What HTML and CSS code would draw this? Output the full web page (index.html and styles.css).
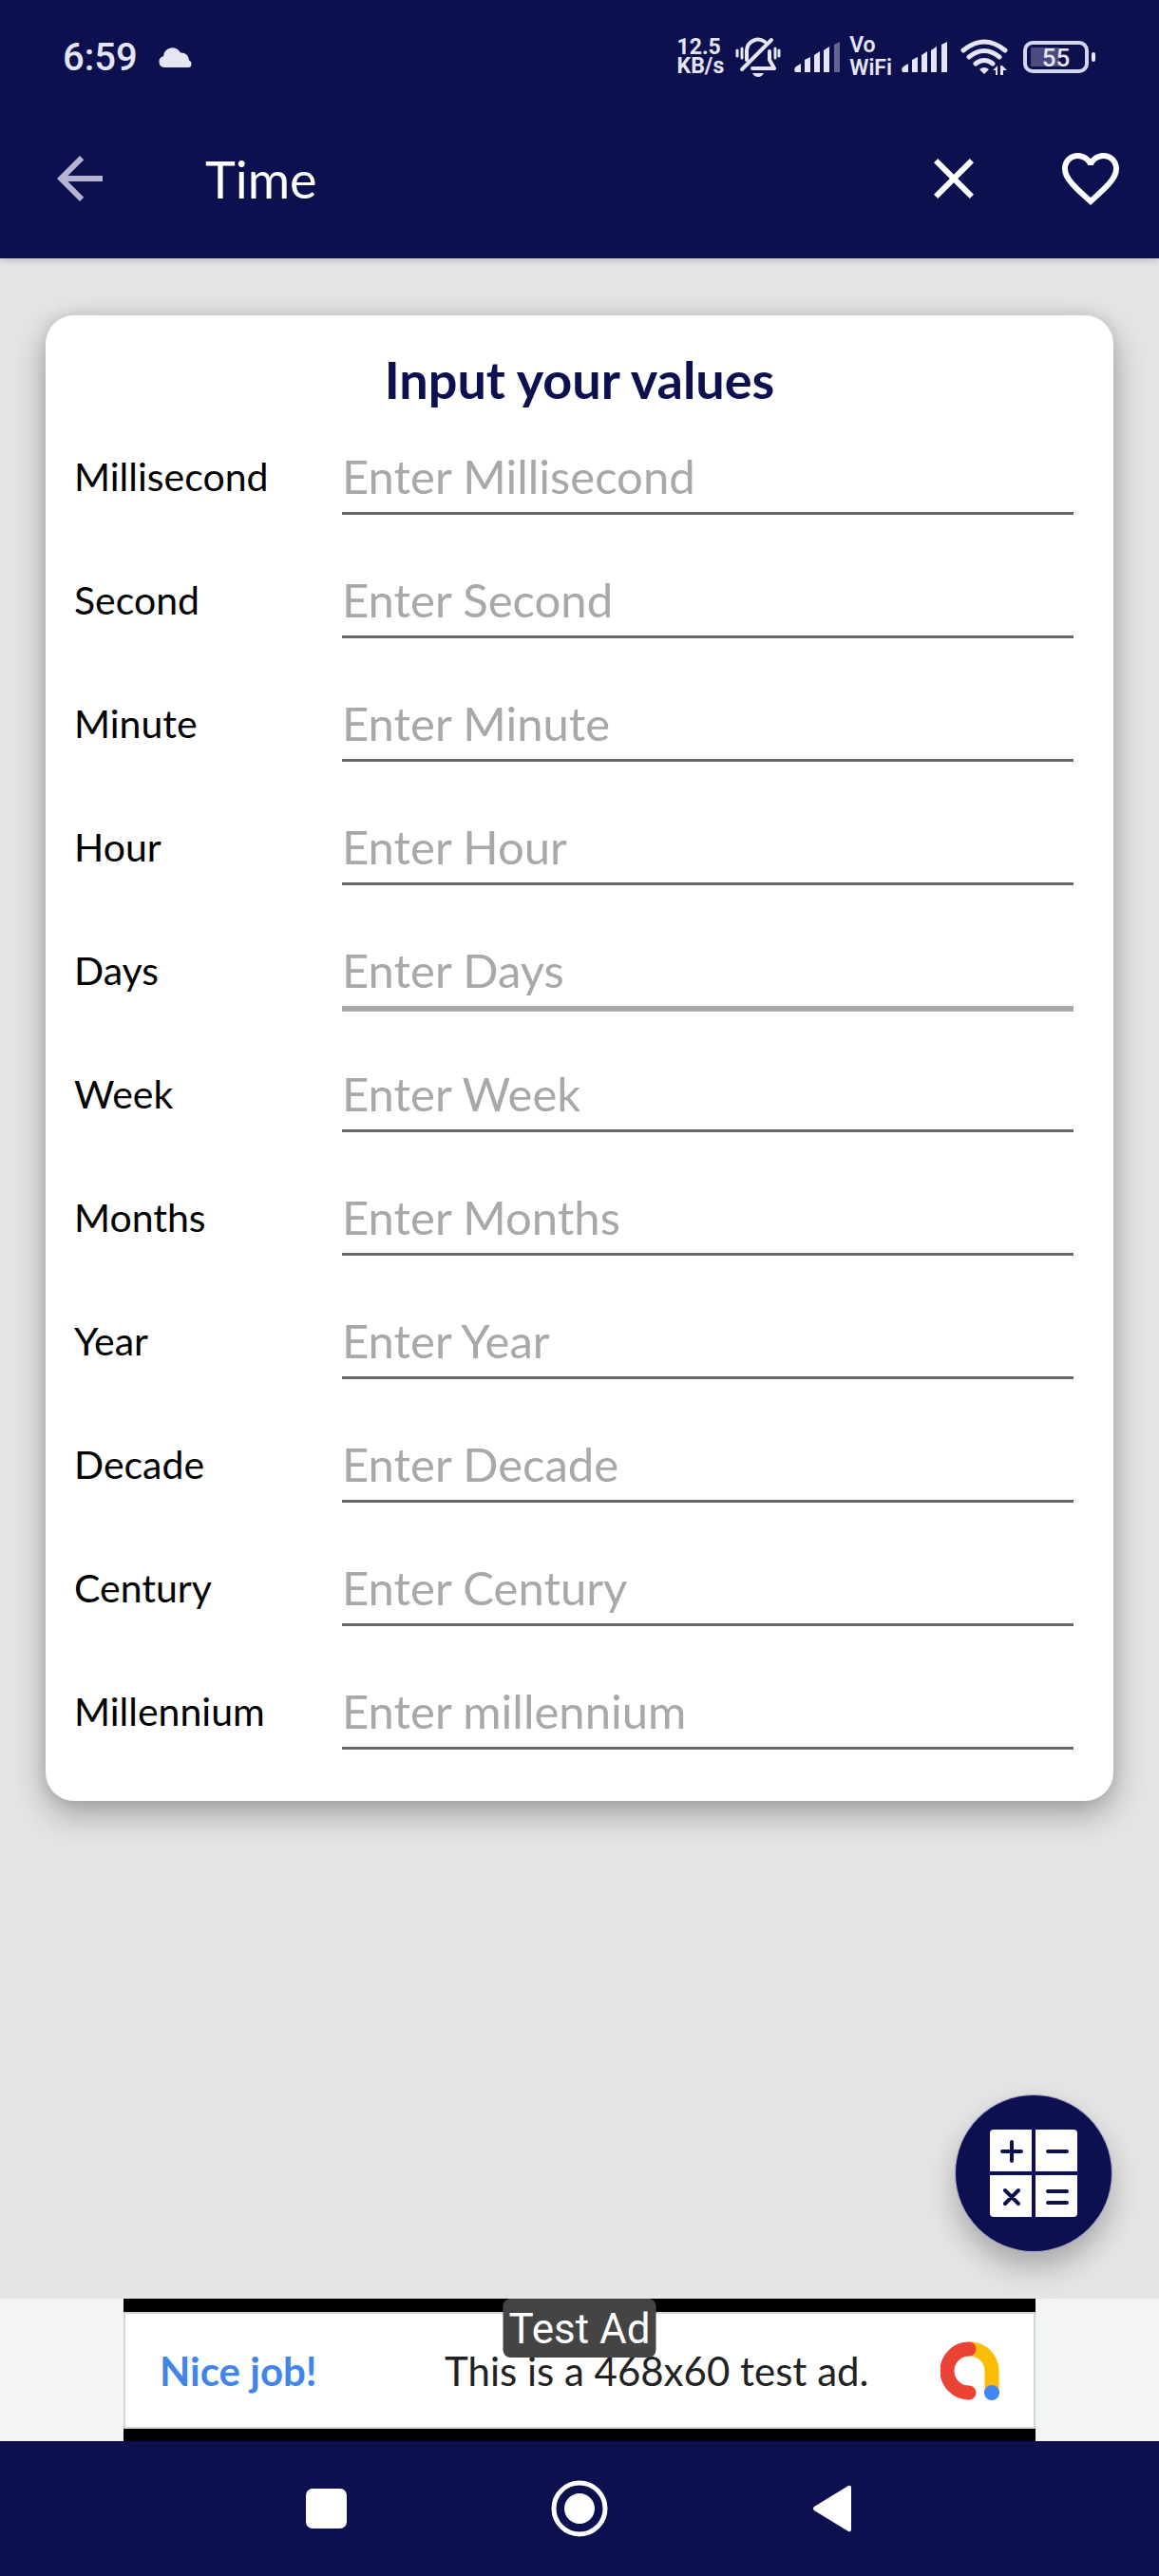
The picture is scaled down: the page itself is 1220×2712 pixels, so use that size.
FILE: index.html
```html
<!DOCTYPE html>
<html lang="en">
<head>
  <meta charset="UTF-8">
  <meta name="viewport" content="width=device-width, initial-scale=1.0">
  <title>Time</title>
  <link rel="stylesheet" href="styles.css">
</head>
<body>
  <header class="top">
    <div class="status">
      <span class="clock">6:59</span>
      <svg class="cloud" width="36" height="22" viewBox="0 0 36 22"><path d="M6 22a6 6 0 0 1-1-11.800A9.500 9.500 0 0 1 23 6.500a8 8 0 0 1 9 8A4 4 0 0 1 32 22z"/></svg>
      <div class="speed">12.5<br>KB/s</div>
      <svg class="bell" width="48" height="42" viewBox="0 0 48 42">
        <g fill="none" stroke="#e6e5f6" stroke-width="4" stroke-linecap="round" stroke-linejoin="round">
          <path d="M12 24V14a12 12 0 0 1 19-9M36 15v9l5 9H18"/>
          <path d="M38 3L7 34"/>
          <path stroke-width="3" d="M2 14v6M7 12v10M42 12v10M46 14v6"/>
        </g>
        <path d="M18 38h12q-2 4-6 4t-6-4z"/>
      </svg>
      <svg class="signal" width="48" height="32" viewBox="0 0 48 32"><path d="M1 32q-2-4 1-6l5-3v9zM11 32V19l6-3v16zM21 32V14l6-4v22zM31 32V9l6-4v27z"/><path opacity=".4" d="M42 32V3l6-3v32z"/></svg>
      <div class="vowifi">Vo<br>WiFi</div>
      <svg class="signal" width="48" height="32" viewBox="0 0 48 32"><path d="M1 32q-2-4 1-6l5-3v9zM11 32V19l6-3v16zM21 32V14l6-4v22zM31 32V9l6-4v27zM42 32V3l6-3v32z"/></svg>
      <svg class="wifi" width="50" height="38" viewBox="0 0 50 38">
        <path fill="none" stroke="#e6e5f6" stroke-width="5" stroke-linecap="round" d="M3 12q22-18 44 0M9 19q16-13 32 0M16 26q9-7 18 0"/>
        <path d="M20 32q5-4 10 0l-5 5zM39 28v10h-2v-5h-3zM42 38V28h2l5 5h-4v5z"/>
      </svg>
      <div class="battery"><span>55</span></div>
    </div>
    <div class="appbar">
      <button class="icon-btn back" aria-label="Back"><svg viewBox="0 0 24 24"><path d="M20 11H7.830l5.590-5.590L12 4l-8 8 8 8 1.410-1.410L7.830 13H20z"/></svg></button>
      <h1>Time</h1>
      <button class="icon-btn" aria-label="Clear"><svg viewBox="0 0 24 24"><path d="M19 6.410L17.590 5 12 10.590 6.410 5 5 6.410 10.590 12 5 17.590 6.410 19 12 13.410 17.590 19 19 17.590 13.410 12z"/></svg></button>
      <button class="icon-btn" aria-label="Favourite"><svg viewBox="0 0 24 24"><path d="M16.500 3c-1.740 0-3.410.81-4.500 2.090C10.910 3.810 9.240 3 7.500 3 4.420 3 2 5.420 2 8.500c0 3.780 3.400 6.860 8.550 11.540L12 21.350l1.450-1.320C18.600 15.360 22 12.280 22 8.500 22 5.420 19.580 3 16.500 3zm-4.400 15.550l-.1.100-.1-.1C7.140 14.240 4 11.390 4 8.500 4 6.500 5.500 5 7.500 5c1.540 0 3.040.99 3.570 2.360h1.870C13.460 5.990 14.960 5 16.500 5c2 0 3.500 1.500 3.500 3.500 0 2.890-3.140 5.740-7.900 10.050z"/></svg></button>
    </div>
  </header>

  <main class="content">
    <form class="card">
      <h2>Input your values</h2>
      <div class="row"><label for="millisecond">Millisecond</label><input id="millisecond" type="text" placeholder="Enter Millisecond"></div>
      <div class="row"><label for="second">Second</label><input id="second" type="text" placeholder="Enter Second"></div>
      <div class="row"><label for="minute">Minute</label><input id="minute" type="text" placeholder="Enter Minute"></div>
      <div class="row"><label for="hour">Hour</label><input id="hour" type="text" placeholder="Enter Hour"></div>
      <div class="row"><label for="days">Days</label><input id="days" class="active" type="text" placeholder="Enter Days"></div>
      <div class="row"><label for="week">Week</label><input id="week" type="text" placeholder="Enter Week"></div>
      <div class="row"><label for="months">Months</label><input id="months" type="text" placeholder="Enter Months"></div>
      <div class="row"><label for="year">Year</label><input id="year" type="text" placeholder="Enter Year"></div>
      <div class="row"><label for="decade">Decade</label><input id="decade" type="text" placeholder="Enter Decade"></div>
      <div class="row"><label for="century">Century</label><input id="century" type="text" placeholder="Enter Century"></div>
      <div class="row"><label for="millennium">Millennium</label><input id="millennium" type="text" placeholder="Enter millennium"></div>
    </form>
    <button class="fab" aria-label="Calculate">
      <svg width="92" height="92" viewBox="0 0 92 92">
        <path fill="#fff" d="M4 0h40v44H0V4q0-4 4-4zM48 0h40q4 0 4 4v40H48zM0 48h44v44H4q-4 0-4-4zM48 48h44v40q0 4-4 4H48z"/>
        <path fill="none" stroke="#0c104e" stroke-width="4" stroke-linecap="round" d="M13 23h20M23 13v20M61 23h20M16 64l14 14M30 64L16 78M61 65h20M61 77h20"/>
      </svg>
    </button>
  </main>

  <footer>
    <div class="ad">
      <a class="banner" href="#ad">
        <span class="nice">Nice job!</span>
        <span class="ad-text">This is a 468x60 test ad.</span>
        <svg class="admob" width="62" height="62" viewBox="0 0 62 62">
          <g fill="none" stroke-width="15" stroke-linecap="round">
            <path stroke="#fbbc04" d="M31 8a23 23 0 0 1 23 23v23"/>
            <path stroke="#ea4335" d="M30 8a23 23 0 0 0 0 46"/>
          </g>
          <circle cx="54" cy="54" r="8" fill="#4285f4"/>
        </svg>
      </a>
      <span class="test-ad">Test Ad</span>
    </div>
    <nav class="navbar">
      <button aria-label="Recents"><svg width="60" height="60" viewBox="0 0 60 60"><rect x="8" y="9" width="43" height="42" rx="7"/></svg></button>
      <button aria-label="Home"><svg width="60" height="60" viewBox="0 0 60 60"><circle cx="30" cy="30" r="27" fill="none" stroke="#fff" stroke-width="5"/><circle cx="30" cy="30" r="16"/></svg></button>
      <button aria-label="Back"><svg width="60" height="60" viewBox="0 0 60 60"><path d="M11 28L47 6q3-1 3 2v44q0 3-3 2L11 32q-2-2 0-4z"/></svg></button>
    </nav>
  </footer>
</body>
</html>
```
FILE: styles.css
```css
* {
  box-sizing: border-box;
}

body {
  margin: 0;
  min-height: 100vh;
  display: flex;
  flex-direction: column;
  background-color: #e5e5e5;
  font-family: 'Lato', sans-serif;
}

button {
  padding: 0;
  border: none;
  background: none;
  cursor: pointer;
}

svg {
  display: block;
  flex: none;
}

/* Header */
.top {
  background-color: #0c104e;
  color: white;
  box-shadow: 0 2px 8px rgba(12, 16, 78, 0.2);
}

.status {
  display: flex;
  align-items: center;
  height: 120px;
  padding: 0 66px;
  color: #e6e5f6;
  fill: #e6e5f6;
  font-family: 'Roboto', sans-serif;
}

.clock {
  font-size: 40px;
  font-weight: 500;
}

.cloud {
  margin-left: 22px;
}

.speed {
  margin-left: auto;
  font-size: 23px;
  line-height: 20px;
  font-weight: 700;
}

.bell {
  margin-left: 12px;
}

.signal {
  margin-left: 14px;
}

.vowifi {
  margin: 0 -4px 0 10px;
  font-size: 23px;
  line-height: 24px;
  font-weight: 600;
}

.wifi {
  margin-left: 14px;
}

.battery {
  position: relative;
  width: 69px;
  height: 34px;
  margin: 0 8px 0 16px;
  border: 4px solid #d3d4ee;
  border-radius: 10px;
  background: linear-gradient(#4b4b7d, #4b4b7d) 4px 3px / 30px 20px no-repeat;
  font-size: 26px;
  line-height: 28px;
  font-weight: 500;
  text-align: center;
}

.battery::after {
  content: '';
  position: absolute;
  right: -11px;
  top: 8px;
  width: 4px;
  height: 10px;
  border-radius: 2px;
  background-color: #e6e5f6;
}

.appbar {
  display: flex;
  align-items: center;
  height: 152px;
  padding: 0 36px 16px 48px;
}

.icon-btn {
  width: 72px;
  height: 72px;
  fill: white;
}

.icon-btn + .icon-btn {
  margin-left: 72px;
}

.back {
  fill: #b6b4d2;
}

.appbar h1 {
  flex: 1;
  margin: 0 0 0 96px;
  font-size: 54px;
  font-weight: 400;
}

/* Form */
.content {
  position: relative;
  flex: 1;
  padding: 60px 48px;
}

.card {
  padding: 28px 0 54px;
  border-radius: 30px;
  background-color: white;
  box-shadow: 0 14px 36px rgba(0, 0, 0, 0.3), 0 0 16px rgba(0, 0, 0, 0.1);
}

.card h2 {
  margin: 0;
  color: #0c104e;
  font-size: 54px;
  line-height: 80px;
  font-weight: 700;
  text-align: center;
}

.row {
  display: flex;
  align-items: flex-start;
  height: 130px;
  padding: 0 42px 0 30px;
}

.card .row:last-child {
  height: 102px;
}

.row label {
  width: 282px;
  font-size: 41px;
  line-height: 124px;
}

.row input {
  flex: 1;
  min-width: 0;
  height: 102px;
  padding: 26px 0 4px;
  border: none;
  border-bottom: 3px solid #666;
  outline: none;
  background: none;
  font-family: inherit;
  font-size: 49px;
  color: black;
}

.row input::placeholder {
  color: #a8a8a8;
  opacity: 1;
}

.row .active {
  height: 105px;
  border-bottom: 6px solid #a8a8a8;
}

.fab {
  position: absolute;
  right: 50px;
  bottom: 50px;
  width: 164px;
  height: 164px;
  display: flex;
  align-items: center;
  justify-content: center;
  border-radius: 50%;
  background-color: #0c104e;
  box-shadow: 0 0 0 1px #a2a4c8, 0 16px 32px rgba(0, 0, 0, 0.28);
}

/* Ad */
.ad {
  position: relative;
  display: flex;
  justify-content: center;
  background-color: #f3f5f5;
}

.banner {
  width: 960px;
  height: 150px;
  display: flex;
  align-items: center;
  padding: 0 38px;
  border: solid black;
  border-width: 14px 0 13px;
  background-color: white;
  box-shadow: inset 0 0 0 2px #cfd5d9;
  font-size: 42px;
  text-decoration: none;
}

.nice {
  width: 300px;
  color: #4285e8;
  font-weight: 700;
}

.ad-text {
  color: #222;
}

.admob {
  margin-left: auto;
}

.test-ad {
  position: absolute;
  top: 0;
  left: 50%;
  transform: translateX(-50%);
  padding: 2px 6px 0;
  border-radius: 8px;
  background-color: #444;
  color: white;
  font-family: 'Roboto', sans-serif;
  font-size: 44px;
  line-height: 60px;
  white-space: nowrap;
}

/* Navigation bar */
.navbar {
  display: flex;
  align-items: center;
  justify-content: center;
  gap: 206px;
  height: 142px;
  background-color: #0c104e;
}

.navbar button {
  fill: white;
}
```
